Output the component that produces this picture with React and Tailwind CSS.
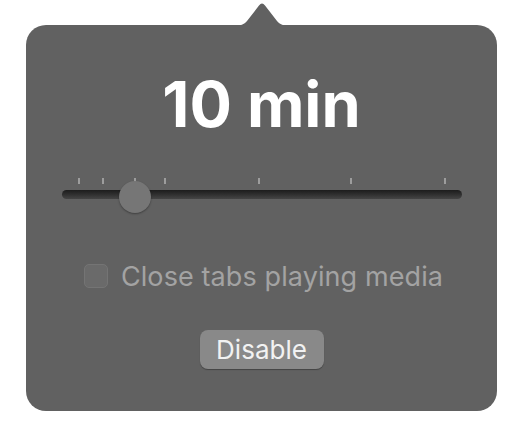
import React from 'react';

const ticks = [17, 41, 73, 103, 197, 289, 383];

function Slider() {
    return (
        <div className="relative w-[400px] h-[35px] mt-[43px]">
            {ticks.map((t) => (
                <div key={t} className="absolute top-0 w-[2px] h-[6px] bg-[#9d9d9d]" style={{ left: t - 1 }} />
            ))}
            <div className="absolute top-[12px] left-0 w-full h-[9px] rounded-full bg-gradient-to-b from-[#1c1c1c] to-[#454545]" />
            <div className="absolute top-[3px] left-[57px] w-[32px] h-[32px] rounded-full bg-[#767676] shadow-[0_1px_2px_rgba(0,0,0,0.35)]" />
        </div>
    );
}

export default function App() {
    return (
        <div className="min-h-screen bg-white pt-[2px] pl-[26px]">
            <div className="w-[471px] flex flex-col items-center">
                <svg width="58" height="24" viewBox="0 0 58 24" className="block -mb-px">
                    <path d="M0 24 C8 24 11 22.5 14 19 L26 3.5 Q29 -0.5 32 3.5 L44 19 C47 22.5 50 24 58 24 Z" fill="#616161" />
                </svg>
                <div className="w-full h-[386px] rounded-[20px] bg-[#616161] flex flex-col items-center">
                    <div className="mt-[48px] h-[62px] flex items-center text-[63px] leading-none font-bold text-white font-['Inter',sans-serif]">
                        10 min
                    </div>
                    <Slider />
                    <label className="mt-[51px] h-[24px] flex items-center gap-[13px] pl-[4px] font-['Inter',sans-serif]">
                        <span className="w-[24px] h-[24px] rounded-[5px] bg-[#6a6a6a] border border-[#747474]" />
                        <span className="text-[27px] leading-none tracking-[0.1px] text-[#a3a3a3]">Close tabs playing media</span>
                    </label>
                    <button className="mt-[42px] w-[124px] h-[39px] rounded-[8px] bg-[#898989] text-[#f2f2f2] text-[26px] leading-none font-['Inter',sans-serif] shadow-[0_1px_1px_rgba(0,0,0,0.3)]">
                        Disable
                    </button>
                </div>
            </div>
        </div>
    );
}
